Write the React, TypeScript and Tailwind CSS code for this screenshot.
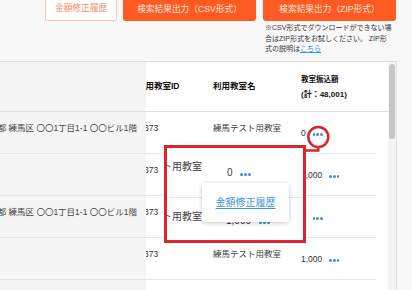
import * as React from "react";

const ROWS = [
  { address: "東京都 練馬区 〇〇1丁目1-1 〇〇ビル1階", name: "練馬テスト用教室", amount: "0" },
  { address: "", name: "練馬テスト用教室", amount: "1,000" },
  { address: "東京都 練馬区 〇〇1丁目1-1 〇〇ビル1階", name: "練馬テスト用教室", amount: "0" },
  { address: "", name: "練馬テスト用教室", amount: "1,000" },
  { address: "", name: "", amount: "" },
];

function Dots({ big = false }: { big?: boolean }) {
  const dot = big ? "h-[3px] w-[3px]" : "h-[2.5px] w-[2.5px]";
  return (
    <span className={big ? "inline-flex items-center gap-[1px]" : "inline-flex items-center gap-[1.25px]"}>
      <span className={`${dot} rounded-full bg-[#3b8ee0]`} />
      <span className={`${dot} rounded-full bg-[#3b8ee0]`} />
      <span className={`${dot} rounded-full bg-[#3b8ee0]`} />
    </span>
  );
}

function Callout() {
  return (
    <div className="absolute left-[164px] top-[145px] h-[98px] w-[142px] overflow-hidden border-[3px] border-[#d9252b] bg-white text-[10px] leading-[15px] text-[#444]">
      <div className="relative h-full w-full">
        <div className="-ml-[25px] flex h-[50px] border-b border-[#e6e6e6]">
          <div className="w-[85px] shrink-0 whitespace-nowrap pt-[11px]">テスト用教室</div>
          <div className="flex items-center">
            <span className="text-[#333]">0</span>
            <span className="ml-[7.5px]">
              <Dots big />
            </span>
          </div>
        </div>
        <div className="-ml-[25px] flex h-[49px]">
          <div className="w-[84px] shrink-0 whitespace-nowrap pt-[11px]">テスト用教室</div>
          <div className="flex items-center pb-[4px]">
            <span className="text-[#333]">1,000</span>
            <span className="ml-[8px]">
              <Dots big />
            </span>
          </div>
        </div>
        <div className="absolute left-[35px] top-[35px] flex h-[39px] w-[87px] items-center justify-center rounded-[2px] bg-white shadow-[0_1px_4px_rgba(0,0,0,0.22)]">
          <span className="text-[10px] text-[#3d93e0] underline underline-offset-2">金額修正履歴</span>
        </div>
      </div>
    </div>
  );
}

export default function App() {
  return (
    <div
      className="relative h-[290px] w-[412px] overflow-hidden bg-[#f8f8f8] text-[#333]"
      style={{ fontFamily: '"Liberation Sans", "Noto Sans CJK JP", sans-serif' }}
    >
      {/* toolbar */}
      <div className="flex h-[61px] pl-[45px] text-[8.7px]">
        <button className="flex h-[21px] w-[72px] items-center justify-center rounded-b-[3px] border border-t-0 border-[#f6c8b5] bg-white pb-[2px] text-[#f38d68]">
          金額修正履歴
        </button>
        <button className="ml-[6px] flex h-[21px] w-[133px] items-center justify-center rounded-b-[3px] bg-[#fe5a22] pb-[2px] text-[#ffe6dc]">
          検索結果出力（CSV形式）
        </button>
        <div className="ml-[7px] flex w-[134px] flex-col">
          <button className="flex h-[21px] w-[133px] items-center justify-center rounded-b-[3px] bg-[#fe5a22] pb-[2px] text-[#ffe6dc]">
            検索結果出力（ZIP形式）
          </button>
          <p className="mt-[2px] whitespace-nowrap pl-[2px] text-[7px] leading-[10.5px] text-[#333]">
            ※CSV形式でダウンロードができない場
            <br />
            合はZIP形式をお試しください。 ZIP形
            <br />
            式の説明は<span className="text-[#3a8ee6] underline">こちら</span>
          </p>
        </div>
      </div>

      {/* table */}
      <div className="flex h-[229px] w-[397px] border-r border-t border-[#dedede] bg-white">
        <div className="w-[388px] text-[8.5px] leading-[12.75px]">
          <div className="flex h-[50px] border-b border-[#dedede] font-bold text-[#111]">
            <div className="w-[146px] shrink-0 bg-[#f5f5f5]" />
            <div className="flex w-[67px] shrink-0 items-center overflow-hidden">
              <span className="-ml-[9px] whitespace-nowrap">利用教室ID</span>
            </div>
            <div className="flex w-[88px] shrink-0 items-center">利用教室名</div>
            <div className="flex flex-col justify-center leading-[15px]">
              <span className="text-[7.5px]">教室振込額</span>
              <span className="text-[8px]">(計：48,001)</span>
            </div>
          </div>
          {ROWS.map((r, i) => (
            <div key={i} className="flex h-[42px] w-[376px] border-b border-[#e6e6e6]">
              <div className="flex w-[146px] shrink-0 justify-end overflow-hidden bg-[#f5f5f5] pr-[9px] pt-[10px]">
                <span className="whitespace-nowrap text-[#444]">{r.address}</span>
              </div>
              <div className="w-[67px] shrink-0 overflow-hidden pt-[10px]">
                {r.name && <span className="-ml-[2px] block whitespace-nowrap">373</span>}
              </div>
              <div className="w-[88px] shrink-0 whitespace-nowrap pt-[10px] text-[#444]">{r.name}</div>
              {r.amount && (
                <div className="flex items-center pt-[1px]">
                  <span>{r.amount}</span>
                  <span className="ml-[7px]">
                    <Dots />
                  </span>
                </div>
              )}
            </div>
          ))}
        </div>
        <div className="w-[8px] bg-[#f4f4f4] px-[1px] pt-[2px]">
          <div className="h-[75px] w-[6px] rounded-full bg-[#c6c6c6]" />
        </div>
      </div>

      <Callout />

      <svg className="absolute left-[300px] top-[120px] h-[40px] w-[40px]" viewBox="0 0 40 40" fill="none">
        <circle cx="18.3" cy="17" r="10" stroke="#d9252b" strokeWidth="2.5" />
        <path d="M18.3 27 V30.5 H5" stroke="#d9252b" strokeWidth="2.5" />
      </svg>
    </div>
  );
}
